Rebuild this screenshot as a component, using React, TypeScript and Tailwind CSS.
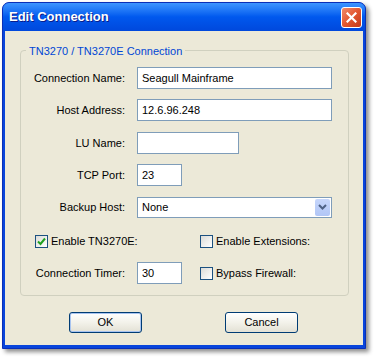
const font = { fontFamily: '"Liberation Sans", Arial, sans-serif' };

function Field({ label, value, w }: { label: string; value: string; w: string }) {
  return (
    <div className="flex items-center h-[22px]">
      <span className="w-[105px] text-right pr-[1px]">{label}</span>
      <input
        readOnly
        value={value}
        className={`ml-[11px] h-[22px] ${w} border border-[#7f9db9] bg-white px-[4px] text-[11px] text-black outline-none`}
        style={font}
      />
    </div>
  );
}

function Check({ label, checked }: { label: string; checked?: boolean }) {
  return (
    <div className="flex items-center">
      <span className="w-[13px] h-[13px] border border-[#1c5180] bg-gradient-to-br from-[#dcdcd7] to-white flex items-center justify-center">
        {checked && (
          <svg width="9" height="9" viewBox="0 0 9 9">
            <path d="M1 4.5 L3.5 7 L8 1.5" stroke="#21a121" strokeWidth="2" fill="none" />
          </svg>
        )}
      </span>
      <span className="ml-[3px]">{label}</span>
    </div>
  );
}

function Button({ label, primary }: { label: string; primary?: boolean }) {
  return (
    <div
      className={`w-[73px] h-[21px] rounded-[3px] border border-[#003c74] bg-gradient-to-b from-white via-[#f3f2ea] to-[#e3e1d5] flex items-center justify-center ${
        primary ? "shadow-[inset_0_0_0_1px_#a8c4f0]" : ""
      }`}
    >
      {label}
    </div>
  );
}

export default function App() {
  return (
    <div className="w-[376px] h-[357px] bg-white pt-[2px] pl-[2px] text-[11px] text-black" style={font}>
      <div className="w-[364px] h-[347px] flex flex-col rounded-t-[7px] bg-[#0845dc] shadow-[3px_3px_4px_rgba(0,0,0,0.45)] border border-[#0a2fb8]">
        <div className="h-[28px] shrink-0 rounded-t-[6px] bg-gradient-to-b from-[#3d95ff] via-[#0058ee] to-[#0048dc] flex items-center justify-between pl-[6px] pr-[3px]">
          <span className="text-white font-bold text-[13px] [text-shadow:1px_1px_0_#0a1d8a]">Edit Connection</span>
          <div className="w-[21px] h-[21px] rounded-[3px] border border-white bg-gradient-to-br from-[#f08a6a] via-[#e2562f] to-[#c2391a] flex items-center justify-center">
            <svg width="11" height="11" viewBox="0 0 11 11">
              <path d="M1.5 1.5 L9.5 9.5 M9.5 1.5 L1.5 9.5" stroke="white" strokeWidth="2.2" strokeLinecap="square" />
            </svg>
          </div>
        </div>
        <div className="flex-1 mx-[2px] mb-[3px] bg-[#ece9d8] pt-[19px] pl-[15px] pr-[14px]">
          <div className="relative border border-[#d0d0bf] rounded-[4px] pt-[16px] pb-[11px]">
            <span className="absolute -top-[8px] left-[5px] px-[3px] bg-[#ece9d8] text-[#0046d5]">
              TN3270 / TN3270E Connection
            </span>
            <Field label="Connection Name:" value="Seagull Mainframe" w="w-[195px]" />
            <div className="mt-[10px]">
              <Field label="Host Address:" value="12.6.96.248" w="w-[195px]" />
            </div>
            <div className="mt-[11px]">
              <Field label="LU Name:" value="" w="w-[102px]" />
            </div>
            <div className="mt-[10px]">
              <Field label="TCP Port:" value="23" w="w-[45px]" />
            </div>
            <div className="mt-[10px] flex items-center h-[22px]">
              <span className="w-[105px] text-right pr-[1px]">Backup Host:</span>
              <div className="ml-[11px] h-[21px] w-[195px] border border-[#7f9db9] bg-white flex items-center justify-between pl-[4px] pr-[1px]">
                <span>None</span>
                <span className="w-[15px] h-[17px] rounded-[2px] bg-gradient-to-b from-[#c6d6fb] to-[#b1c6f6] flex items-center justify-center">
                  <svg width="9" height="6" viewBox="0 0 9 6">
                    <path d="M1 1 L4.5 4.5 L8 1" stroke="#4d6185" strokeWidth="2" fill="none" />
                  </svg>
                </span>
              </div>
            </div>
            <div className="mt-[12px] flex items-center h-[22px]">
              <div className="w-[179px] pl-[14px]">
                <Check label="Enable TN3270E:" checked />
              </div>
              <Check label="Enable Extensions:" />
            </div>
            <div className="mt-[10px] flex items-center h-[22px]">
              <span className="w-[105px] text-right pr-[1px]">Connection Timer:</span>
              <input
                readOnly
                value="30"
                className="ml-[11px] h-[22px] w-[45px] border border-[#7f9db9] bg-white px-[4px] text-[11px] text-black outline-none"
                style={font}
              />
              <div className="ml-[18px]">
                <Check label="Bypass Firewall:" />
              </div>
            </div>
          </div>
          <div className="mt-[16px] flex pl-[49px]">
            <Button label="OK" primary />
            <div className="ml-[83px]">
              <Button label="Cancel" />
            </div>
          </div>
        </div>
      </div>
    </div>
  );
}
